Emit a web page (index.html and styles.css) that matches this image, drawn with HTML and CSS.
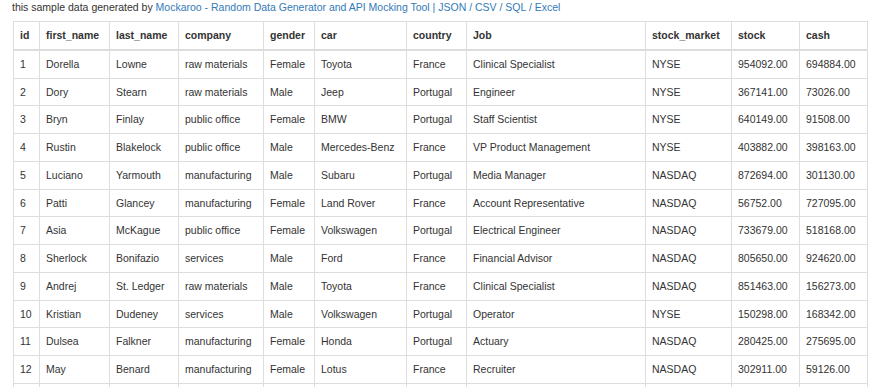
FILE: index.html
```html
<!DOCTYPE html>
<html>
<head>
<meta charset="utf-8">
<title>Sample data</title>
<link rel="stylesheet" href="styles.css">
</head>
<body>
<div class="page">
  <p class="intro">this sample data generated by <a href="#">Mockaroo - Random Data Generator and API Mocking Tool | JSON / CSV / SQL / Excel</a></p>
  <table class="data">
    <colgroup>
      <col class="c-id"><col class="c-first"><col class="c-last"><col class="c-company"><col class="c-gender"><col class="c-car"><col class="c-country"><col class="c-job"><col class="c-market"><col class="c-stock"><col class="c-cash">
    </colgroup>
    <thead>
      <tr><th>id</th><th>first_name</th><th>last_name</th><th>company</th><th>gender</th><th>car</th><th>country</th><th>Job</th><th>stock_market</th><th>stock</th><th>cash</th></tr>
    </thead>
    <tbody>
      <tr><td>1</td><td>Dorella</td><td>Lowne</td><td>raw materials</td><td>Female</td><td>Toyota</td><td>France</td><td>Clinical Specialist</td><td>NYSE</td><td>954092.00</td><td>694884.00</td></tr>
      <tr><td>2</td><td>Dory</td><td>Stearn</td><td>raw materials</td><td>Male</td><td>Jeep</td><td>Portugal</td><td>Engineer</td><td>NYSE</td><td>367141.00</td><td>73026.00</td></tr>
      <tr><td>3</td><td>Bryn</td><td>Finlay</td><td>public office</td><td>Female</td><td>BMW</td><td>Portugal</td><td>Staff Scientist</td><td>NYSE</td><td>640149.00</td><td>91508.00</td></tr>
      <tr><td>4</td><td>Rustin</td><td>Blakelock</td><td>public office</td><td>Male</td><td>Mercedes-Benz</td><td>France</td><td>VP Product Management</td><td>NYSE</td><td>403882.00</td><td>398163.00</td></tr>
      <tr><td>5</td><td>Luciano</td><td>Yarmouth</td><td>manufacturing</td><td>Male</td><td>Subaru</td><td>Portugal</td><td>Media Manager</td><td>NASDAQ</td><td>872694.00</td><td>301130.00</td></tr>
      <tr><td>6</td><td>Patti</td><td>Glancey</td><td>manufacturing</td><td>Female</td><td>Land Rover</td><td>France</td><td>Account Representative</td><td>NASDAQ</td><td>56752.00</td><td>727095.00</td></tr>
      <tr><td>7</td><td>Asia</td><td>McKague</td><td>public office</td><td>Female</td><td>Volkswagen</td><td>Portugal</td><td>Electrical Engineer</td><td>NASDAQ</td><td>733679.00</td><td>518168.00</td></tr>
      <tr><td>8</td><td>Sherlock</td><td>Bonifazio</td><td>services</td><td>Male</td><td>Ford</td><td>France</td><td>Financial Advisor</td><td>NASDAQ</td><td>805650.00</td><td>924620.00</td></tr>
      <tr><td>9</td><td>Andrej</td><td>St. Ledger</td><td>raw materials</td><td>Male</td><td>Toyota</td><td>France</td><td>Clinical Specialist</td><td>NASDAQ</td><td>851463.00</td><td>156273.00</td></tr>
      <tr><td>10</td><td>Kristian</td><td>Dudeney</td><td>services</td><td>Male</td><td>Volkswagen</td><td>Portugal</td><td>Operator</td><td>NYSE</td><td>150298.00</td><td>168342.00</td></tr>
      <tr><td>11</td><td>Dulsea</td><td>Falkner</td><td>manufacturing</td><td>Female</td><td>Honda</td><td>Portugal</td><td>Actuary</td><td>NASDAQ</td><td>280425.00</td><td>275695.00</td></tr>
      <tr><td>12</td><td>May</td><td>Benard</td><td>manufacturing</td><td>Female</td><td>Lotus</td><td>France</td><td>Recruiter</td><td>NASDAQ</td><td>302911.00</td><td>59126.00</td></tr>
      <tr class="more"><td></td><td></td><td></td><td></td><td></td><td></td><td></td><td></td><td></td><td></td><td></td></tr>
    </tbody>
  </table>
</div>
</body>
</html>
```

FILE: styles.css
```css
html, body {
  margin: 0;
  padding: 0;
  background: #fff;
}
body {
  font-family: "Liberation Sans", Arial, sans-serif;
  font-size: 10.5px;
  line-height: 15px;
  color: #333;
}
.page {
  padding: 0 0 0 13px;
  width: 854px;
}
.intro {
  margin: 0 0 6px -1px;
  line-height: 15px;
}
.intro a {
  color: #337ab7;
  text-decoration: none;
}
.data {
  width: 854px;
  table-layout: fixed;
  border-collapse: collapse;
  border-spacing: 0;
  border: 1px solid #ddd;
}
.data th,
.data td {
  border: 1px solid #ddd;
  padding: 6px 5px 5.75px 6px;
  line-height: 15px;
  text-align: left;
  vertical-align: top;
  white-space: nowrap;
  overflow: hidden;
}
.data th {
  font-weight: bold;
  color: #333;
  border-bottom: 2px solid #ddd;
  vertical-align: bottom;
}
.data .more td {
  height: 15px;
}
.c-id { width: 26px; }
.c-first { width: 70px; }
.c-last { width: 69px; }
.c-company { width: 85px; }
.c-gender { width: 51px; }
.c-car { width: 92px; }
.c-country { width: 60px; }
.c-job { width: 179px; }
.c-market { width: 86px; }
.c-stock { width: 68px; }
.c-cash { width: 68px; }
```
